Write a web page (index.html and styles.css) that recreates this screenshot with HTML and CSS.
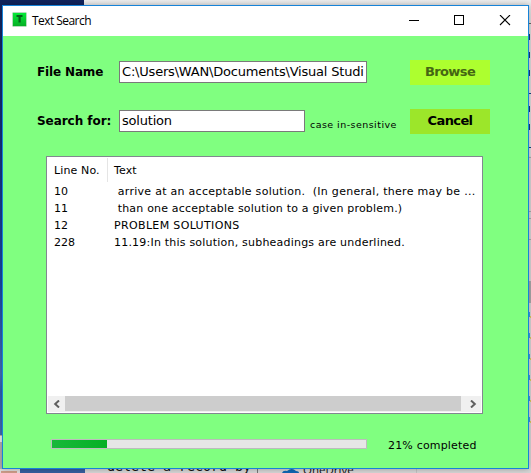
FILE: index.html
```html
<!DOCTYPE html>
<html lang="en">
<head>
<meta charset="utf-8">
<title>Text Search</title>
<link rel="stylesheet" href="styles.css">
</head>
<body>
<div class="desktop">
  <div class="wall wall-left"></div>
  <div class="wall wall-top"></div>
  <svg class="behind" width="531" height="473" aria-hidden="true">
    <rect x="0" y="435" width="2" height="38" fill="#b8b0b0"/>
    <rect x="0" y="436" width="2" height="6" fill="#eee"/>
    <rect x="0" y="469" width="20" height="4" fill="#dedede"/>
    <rect x="1" y="471" width="16" height="2" fill="#cf9d89"/>
    <rect x="20" y="469" width="65" height="4" fill="#365f9f"/>
    <rect x="85" y="469" width="446" height="4" fill="#d6d6d6"/>
    <rect x="257" y="469" width="1" height="4" fill="#777"/>
    <rect x="416" y="469" width="1" height="4" fill="#c2c2c2"/>
    <rect x="529" y="23" width="2" height="1" fill="#666"/>
    <rect x="529" y="24" width="2" height="132" fill="#dedede"/>
    <path d="M529 34h1v6h-1zM529 52h1v6h-1zM529 70h1v6h-1zM529 93h2v1h-2zM529 106h1v6h-1zM529 124h1v6h-1zM529 147h2v1h-2z" fill="#153f7c"/>
    <path d="M529 157h2v1h-2zM529 211h2v1h-2zM529 218h2v1h-2zM529 239h2v1h-2z" fill="#aaa"/>
    <rect x="529" y="281" width="2" height="22" fill="#aaa"/>
    <path d="M529 312h1v5h-1zM529 333h1v5h-1zM529 354h1v5h-1zM529 375h1v5h-1zM529 396h1v5h-1zM529 417h1v5h-1z" fill="#3a9fe0"/>
    <path d="M530 316h1v2h-1zM530 337h1v2h-1zM530 358h1v2h-1zM530 379h1v2h-1zM530 400h1v2h-1zM530 421h1v2h-1z" fill="#d9c964"/>
    <path d="M282 473q1-3 5-2q5-4 9 0q3 0 3 2z" fill="#0f67b4"/>
  </svg>
  <span class="peek peek-code">delete a record by</span>
  <span class="peek peek-drive">OneDrive</span>

  <main class="window">
    <header class="titlebar">
      <svg class="app-icon" width="15" height="15" viewBox="0 0 15 15">
        <defs><linearGradient id="g" x1="0" y1="0" x2="0" y2="1"><stop offset="0" stop-color="#05ec38"/><stop offset="1" stop-color="#05ac24"/></linearGradient></defs>
        <rect x=".5" y=".5" width="14" height="14" rx="1" fill="url(#g)" stroke="#b5dbbc"/>
        <path d="M4.5 3h6v2H8.700v5.500H6.500V5h-2z" fill="#075f1b"/>
      </svg>
      <h1 class="title">Text Search</h1>
      <svg class="controls" width="112" height="11" viewBox="0 0 112 11" fill="none" stroke="#000" shape-rendering="crispEdges">
        <path d="M0 5.500h10M45.500.5h9v9h-9z"/>
        <path d="M91 0l10 10M101 0l-10 10" shape-rendering="auto" stroke-width="1.100"/>
      </svg>
    </header>
    <section class="form">
      <label class="label file-label">File Name</label>
      <div class="field"><span class="value path">C:\Users\WAN\Documents\Visual Studi</span></div>
      <button class="btn browse">Browse</button>
    </section>
    <section class="form search">
      <label class="label">Search for:</label>
      <div class="field short"><span class="value">solution</span></div>
      <span class="hint">case in-sensitive</span>
      <button class="btn cancel">Cancel</button>
    </section>
    <section class="list">
      <div class="row head"><span class="no">Line No.</span><span class="text">Text</span></div>
      <div class="row"><span class="no">10</span><span class="text t1"> arrive at an acceptable solution.  (In general, there may be ...</span></div>
      <div class="row"><span class="no">11</span><span class="text t2"> than one acceptable solution to a given problem.)</span></div>
      <div class="row"><span class="no">12</span><span class="text t3">PROBLEM SOLUTIONS</span></div>
      <div class="row"><span class="no">228</span><span class="text t4">11.19:In this solution, subheadings are underlined.</span></div>
      <div class="scrollbar">
        <span class="arrow"><svg width="8" height="8" viewBox="0 0 8 8"><path d="M6 .5L2.200 4L6 7.500" /></svg></span>
        <span class="thumb"></span>
        <span class="arrow right"><svg width="8" height="8" viewBox="0 0 8 8"><path d="M2 .5L5.800 4L2 7.500" /></svg></span>
      </div>
    </section>
    <footer class="status">
      <div class="progress"><div class="fill"></div></div>
      <span class="percent">21% completed</span>
    </footer>
  </main>
</div>
</body>
</html>
```

FILE: styles.css
```css
* { box-sizing: border-box; }
body { margin: 0; font-family: "DejaVu Sans", Verdana, sans-serif; color: #000; }
.desktop { position: relative; width: 531px; height: 473px; padding: 5px 0 0 2px; overflow: hidden; background: #d8d8d8; }
.wall { position: absolute; left: 0; top: 0; }
.wall-left { width: 84px; height: 435px; background: linear-gradient(#12245c, #122f7a 30%, #1749a5 65%, #416eb9 86%, #2d61b5 90%, #426eb3); }
.wall-top { left: 84px; right: 0; height: 23px; background: linear-gradient(#ededed, #dedede); }
.behind { position: absolute; left: 0; top: 0; }
.peek { position: absolute; white-space: nowrap; line-height: 14px; color: #111; }
.peek-code { left: 107px; top: 460px; font: 13.300px/14px "DejaVu Sans Mono", monospace; }
.peek-drive { left: 303px; top: 463px; font: 11.500px/14px "Open Sans", sans-serif; }
.window { position: relative; width: 527px; height: 464px; border: 1px solid #1683d8; background: #80ff80; box-shadow: 0 0 6px rgba(0,0,0,.3); }
.titlebar { display: flex; align-items: center; height: 30px; padding-left: 9px; background: #fff; }
.app-icon { margin-top: -3px; }
.title { margin: 0 0 0 5px; font: 12px/16px "Open Sans", sans-serif; letter-spacing: -.55px; width: 377px; }
.controls { flex: none; margin-top: -1px; }
.form { display: flex; height: 25px; margin: 24px 38px 0 34px; }
.form.search { margin-top: 24px; }
.label { width: 82px; font-size: 12px; font-weight: bold; line-height: 25px; white-space: nowrap; letter-spacing: -.05px; }
.file-label { letter-spacing: -.15px; }
.field { width: 248px; height: 22px; margin-top: 1px; padding-left: 2px; border: 1px solid #7a7a7a; background: #fff; overflow: hidden; }
.short { width: 186px; }
.value { display: block; font-size: 13px; line-height: 19px; white-space: nowrap; letter-spacing: -.2px; }
.hint { margin: 8px 0 0 5px; font-size: 9.500px; line-height: 16px; letter-spacing: .45px; white-space: nowrap; }
.btn { width: 80px; height: 25px; margin: 0 0 0 auto; padding: 0 0 1px; border: 0; background: #adff2f; font: bold 13px/24px "DejaVu Sans", sans-serif; letter-spacing: -.6px; flex: none; }
.browse { color: #456613; }
.cancel { background: #9ce62a; color: #000; }
.list { display: flex; flex-direction: column; width: 437px; height: 258px; margin: 22px 0 0 43px; border: 1px solid #828790; background: #fff; padding: 1px; }
.row { display: flex; height: 17px; line-height: 17px; font-size: 11px; white-space: pre; }
.head { height: 24px; line-height: 25px; margin-bottom: 1px; letter-spacing: .13px; }
.no { width: 60px; padding-left: 6px; }
.head .no { border-right: 1px solid #e5e5e5; }
.text { padding-left: 6px; }
.t1 { letter-spacing: .28px; }
.t2 { letter-spacing: .19px; }
.t3 { letter-spacing: .35px; }
.t4 { letter-spacing: .21px; }
.scrollbar { display: flex; height: 16px; margin-top: auto; background: #f0f0f0; }
.arrow { display: flex; align-items: center; justify-content: center; width: 17px; }
.arrow path { fill: none; stroke: #606060; stroke-width: 2; }
.thumb { width: 396px; height: 15px; background: #cdcdcd; }
.right { width: 20px; padding-left: 3px; }
.status { display: flex; margin: 25px 0 0 48px; }
.progress { width: 316px; height: 10px; border: 1px solid #bcbcbc; background: #e6e6e6; }
.fill { width: 55px; height: 8px; background: linear-gradient(90deg, #18b83a, #06b025); }
.percent { margin: -1px 0 0 21px; font-size: 11px; line-height: 16px; letter-spacing: .18px; white-space: nowrap; }
```
